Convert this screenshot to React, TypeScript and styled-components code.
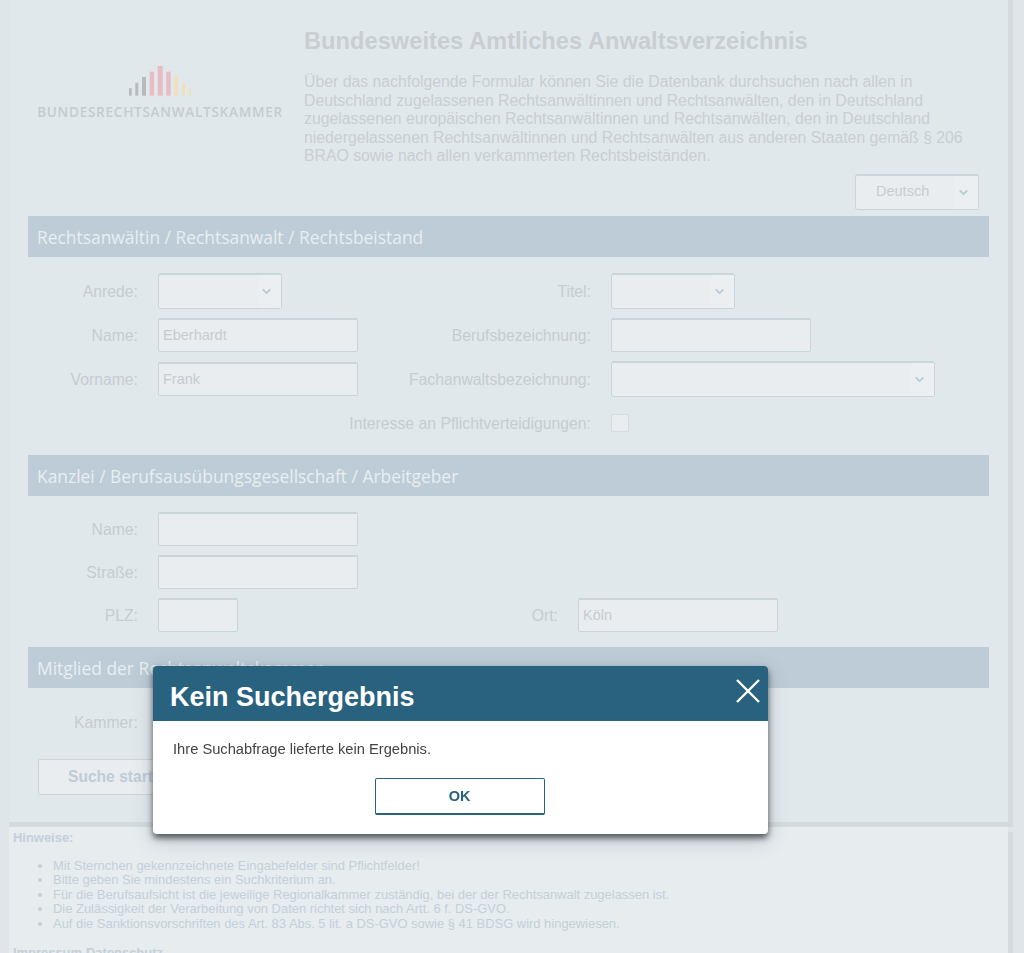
import * as React from 'react'
import styled, { createGlobalStyle } from 'styled-components'
import { ChevronDown } from 'lucide-react'

const colors = {
  page: '#e0e5e9',
  panel: '#e1e8ec',
  footer: '#e7ecef',
  shadow: '#d3dbdf',
  band: '#bdccd6',
  bandText: '#e9eef1',
  label: '#c6ccd0',
  field: '#e9edf0',
  fieldBorder: '#c9d5dd',
  hint: '#c3d0da',
  dialog: '#29627f',
}

const GlobalStyle = createGlobalStyle`
  html, body {
    margin: 0;
    height: 953px;
    overflow: hidden;
    background: ${colors.page};
    font-family: "Liberation Sans", Arial, sans-serif;
  }
  * { box-sizing: border-box; }
`

const S = {
  Panel: styled.main`
    margin-left: 9px;
    width: 999px;
    height: 822px;
    padding: 0 19px;
    background: ${colors.panel};
    box-shadow: 5px 0 0 ${colors.shadow}, 0 5px 0 ${colors.shadow}, 5px 5px 0 ${colors.shadow};
  `,
  Header: styled.header`
    display: grid;
    grid-template-columns: 276px 1fr;
    height: 174px;
  `,
  Logo: styled.div`
    display: flex;
    flex-direction: column;
    align-items: center;
    width: 264px;
    padding-top: 66px;
  `,
  LogoText: styled.div`
    margin-top: 7px;
    font-family: "Open Sans", sans-serif;
    font-size: 13.6px;
    font-weight: 600;
    line-height: 18px;
    letter-spacing: 0.71px;
    white-space: nowrap;
    color: #c6cbcf;
  `,
  Title: styled.h1`
    margin: 27px 0 0;
    font-size: 23.7px;
    line-height: 28px;
    font-weight: bold;
    color: #c9ced2;
  `,
  Intro: styled.p`
    margin: 18px 0 0;
    font-size: 15.8px;
    line-height: 18.5px;
    color: #c9ced2;
  `,
  LangRow: styled.div`
    display: flex;
    justify-content: flex-end;
    height: 42px;
    padding-right: 10px;
  `,
  Band: styled.h2`
    margin: 0 0 16px;
    height: 41px;
    padding: 1px 0 0 9px;
    background: ${colors.band};
    color: ${colors.bandText};
    font-family: "Open Sans", sans-serif;
    font-size: 17.4px;
    font-weight: 400;
    line-height: 41px;
  `,
  Rows: styled.div`
    display: flex;
    flex-direction: column;
    gap: 9px;
    margin-bottom: 15px;
  `,
  Row: styled.div<{ $second?: number }>`
    display: grid;
    grid-template-columns: 110px 200px ${(p) => p.$second ?? 213}px 1fr;
    column-gap: 20px;
    align-items: center;
    min-height: 34px;
  `,
  Label: styled.label`
    padding-top: 2px;
    text-align: right;
    font-size: 15.75px;
    color: ${colors.label};
    white-space: nowrap;
  `,
  WideLabel: styled.label`
    grid-column: 1 / span 3;
    padding-top: 2px;
    text-align: right;
    font-size: 15.75px;
    color: ${colors.label};
    white-space: nowrap;
  `,
  Input: styled.input<{ $width?: number }>`
    display: block;
    width: ${(p) => p.$width ?? 200}px;
    height: 34px;
    padding: 0 4px 2px;
    background: ${colors.field};
    border: 1px solid ${colors.fieldBorder};
    border-top-width: 2px;
    border-radius: 2px;
    font-family: inherit;
    font-size: 14.5px;
    color: #c6ccd0;
    outline: none;
  `,
  Select: styled.div<{ $width: number }>`
    display: flex;
    width: ${(p) => p.$width}px;
    height: 36px;
    background: ${colors.field};
    border: 1px solid ${colors.fieldBorder};
    border-top-width: 2px;
    border-radius: 3px;
  `,
  SelectValue: styled.span`
    flex: 1;
    padding-left: 20px;
    font-size: 14.5px;
    line-height: 31px;
    color: #c6ccd0;
  `,
  SelectArrow: styled.span`
    display: flex;
    align-items: center;
    justify-content: center;
    width: 23px;
    padding-right: 7px;
    background: #ebeff2;
    color: #bccad3;
  `,
  Checkbox: styled.span`
    display: block;
    width: 18px;
    height: 18px;
    background: ${colors.field};
    border: 1px solid #d3dde3;
    border-radius: 2px;
  `,
  SearchButton: styled.button`
    display: block;
    margin: 19px 0 0 10px;
    width: 190px;
    height: 36px;
    padding: 0;
    background: ${colors.field};
    border: 1px solid ${colors.fieldBorder};
    border-radius: 2px;
    font-family: inherit;
    font-size: 15.6px;
    font-weight: bold;
    color: #bfccd6;
    text-align: left;
    text-indent: 29px;
  `,
  Footer: styled.footer`
    margin: 5px 0 0 9px;
    width: 999px;
    height: 200px;
    padding: 4px;
    background: ${colors.footer};
    box-shadow: 5px 5px 0 ${colors.shadow};
    font-size: 12.95px;
    line-height: 14.5px;
    color: ${colors.hint};
  `,
  HintTitle: styled.div`
    font-weight: bold;
  `,
  HintList: styled.ul`
    margin: 13px 0 15px;
    padding-left: 40px;
  `,
  FootLink: styled.a`
    font-weight: bold;
    margin-right: 4px;
  `,
  Overlay: styled.div`
    position: fixed;
    inset: 0;
    padding: 666px 0 0 153px;
  `,
  Dialog: styled.section`
    width: 615px;
    height: 168px;
    background: #fff;
    border-radius: 4px;
    box-shadow: 0 4px 6px rgba(40, 45, 50, 0.75), 0 6px 20px rgba(60, 80, 95, 0.25);
    overflow: hidden;
  `,
  DialogHead: styled.header`
    display: flex;
    align-items: center;
    justify-content: space-between;
    height: 55px;
    padding: 0 7px 0 17px;
    background: ${colors.dialog};
  `,
  DialogTitle: styled.h3`
    margin: 8px 0 0;
    font-size: 27px;
    font-weight: bold;
    color: #fff;
  `,
  CloseIcon: styled.svg`
    display: block;
    margin-top: -5px;
  `,
  DialogBody: styled.div`
    display: flex;
    flex-direction: column;
    align-items: center;
    padding: 20px 20px 0;
  `,
  DialogText: styled.p`
    align-self: flex-start;
    margin: 0;
    font-size: 14.7px;
    line-height: 17px;
    color: #444;
  `,
  OkButton: styled.button`
    margin: 20px 0 0 -2px;
    width: 170px;
    height: 37px;
    background: #fff;
    border: 1px solid ${colors.dialog};
    border-bottom-width: 2px;
    border-radius: 2px;
    font-family: inherit;
    font-size: 14.5px;
    font-weight: bold;
    color: ${colors.dialog};
  `,
}

function Select({ width, value }: { width: number; value?: string }) {
  return (
    <S.Select $width={width}>
      <S.SelectValue>{value}</S.SelectValue>
      <S.SelectArrow>
        <ChevronDown size={13} strokeWidth={3.5} />
      </S.SelectArrow>
    </S.Select>
  )
}

const bars = [
  { x: 129, w: 2.7, h: 7.5, c: '#b8bbbe' },
  { x: 135.3, w: 3, h: 13, c: '#b8bbbe' },
  { x: 142, w: 4, h: 18.7, c: '#b8bbbe' },
  { x: 149.7, w: 4.4, h: 24, c: '#e9bcc2' },
  { x: 157.7, w: 5, h: 29.7, c: '#e9bcc2' },
  { x: 166.3, w: 4.4, h: 24, c: '#e9bcc2' },
  { x: 174.3, w: 3.7, h: 18.7, c: '#efe0b5' },
  { x: 182.3, w: 2.7, h: 13, c: '#efe0b5' },
  { x: 188.7, w: 2.3, h: 7.5, c: '#efe0b5' },
]

function LogoBars() {
  return (
    <svg width="62" height="30" viewBox="129 66 62 30">
      {bars.map((b) => (
        <rect key={b.x} x={b.x} y={95.7 - b.h} width={b.w} height={b.h} fill={b.c} />
      ))}
    </svg>
  )
}

const hints = [
  'Mit Sternchen gekennzeichnete Eingabefelder sind Pflichtfelder!',
  'Bitte geben Sie mindestens ein Suchkriterium an.',
  'Für die Berufsaufsicht ist die jeweilige Regionalkammer zuständig, bei der der Rechtsanwalt zugelassen ist.',
  'Die Zulässigkeit der Verarbeitung von Daten richtet sich nach Artt. 6 f. DS-GVO.',
  'Auf die Sanktionsvorschriften des Art. 83 Abs. 5 lit. a DS-GVO sowie § 41 BDSG wird hingewiesen.',
]

export default function App() {
  return (
    <>
      <GlobalStyle />
      <S.Panel>
        <S.Header>
          <S.Logo>
            <LogoBars />
            <S.LogoText>BUNDESRECHTSANWALTSKAMMER</S.LogoText>
          </S.Logo>
          <div>
            <S.Title>Bundesweites Amtliches Anwaltsverzeichnis</S.Title>
            <S.Intro>
              Über das nachfolgende Formular können Sie die Datenbank durchsuchen nach allen in
              <br />
              Deutschland zugelassenen Rechtsanwältinnen und Rechtsanwälten, den in Deutschland
              <br />
              zugelassenen europäischen Rechtsanwältinnen und Rechtsanwälten, den in Deutschland
              <br />
              niedergelassenen Rechtsanwältinnen und Rechtsanwälten aus anderen Staaten gemäß § 206
              <br />
              BRAO sowie nach allen verkammerten Rechtsbeiständen.
            </S.Intro>
          </div>
        </S.Header>
        <S.LangRow>
          <Select width={124} value="Deutsch" />
        </S.LangRow>

        <S.Band>Rechtsanwältin / Rechtsanwalt / Rechtsbeistand</S.Band>
        <S.Rows>
          <S.Row>
            <S.Label>Anrede:</S.Label>
            <Select width={124} />
            <S.Label>Titel:</S.Label>
            <Select width={124} />
          </S.Row>
          <S.Row>
            <S.Label>Name:</S.Label>
            <S.Input readOnly value="Eberhardt" />
            <S.Label>Berufsbezeichnung:</S.Label>
            <S.Input readOnly value="" />
          </S.Row>
          <S.Row>
            <S.Label>Vorname:</S.Label>
            <S.Input readOnly value="Frank" />
            <S.Label>Fachanwaltsbezeichnung:</S.Label>
            <Select width={324} />
          </S.Row>
          <S.Row>
            <S.WideLabel>Interesse an Pflichtverteidigungen:</S.WideLabel>
            <S.Checkbox />
          </S.Row>
        </S.Rows>

        <S.Band>Kanzlei / Berufsausübungsgesellschaft / Arbeitgeber</S.Band>
        <S.Rows>
          <S.Row>
            <S.Label>Name:</S.Label>
            <S.Input readOnly value="" />
          </S.Row>
          <S.Row>
            <S.Label>Straße:</S.Label>
            <S.Input readOnly value="" />
          </S.Row>
          <S.Row $second={180}>
            <S.Label>PLZ:</S.Label>
            <S.Input readOnly value="" $width={80} />
            <S.Label>Ort:</S.Label>
            <S.Input readOnly value="Köln" />
          </S.Row>
        </S.Rows>

        <S.Band>Mitglied der Rechtsanwaltskammer</S.Band>
        <S.Row>
          <S.Label>Kammer:</S.Label>
          <Select width={200} />
        </S.Row>
        <S.SearchButton>Suche starten</S.SearchButton>
      </S.Panel>

      <S.Footer>
        <S.HintTitle>Hinweise:</S.HintTitle>
        <S.HintList>
          {hints.map((h) => (
            <li key={h}>{h}</li>
          ))}
        </S.HintList>
        <S.FootLink>Impressum</S.FootLink>
        <S.FootLink>Datenschutz</S.FootLink>
      </S.Footer>

      <S.Overlay>
        <S.Dialog>
          <S.DialogHead>
            <S.DialogTitle>Kein Suchergebnis</S.DialogTitle>
            <S.CloseIcon width="26" height="26" viewBox="0 0 26 26">
              <path d="M2 2 L24 24 M24 2 L2 24" stroke="#fff" strokeWidth="2.4" fill="none" />
            </S.CloseIcon>
          </S.DialogHead>
          <S.DialogBody>
            <S.DialogText>Ihre Suchabfrage lieferte kein Ergebnis.</S.DialogText>
            <S.OkButton>OK</S.OkButton>
          </S.DialogBody>
        </S.Dialog>
      </S.Overlay>
    </>
  )
}
